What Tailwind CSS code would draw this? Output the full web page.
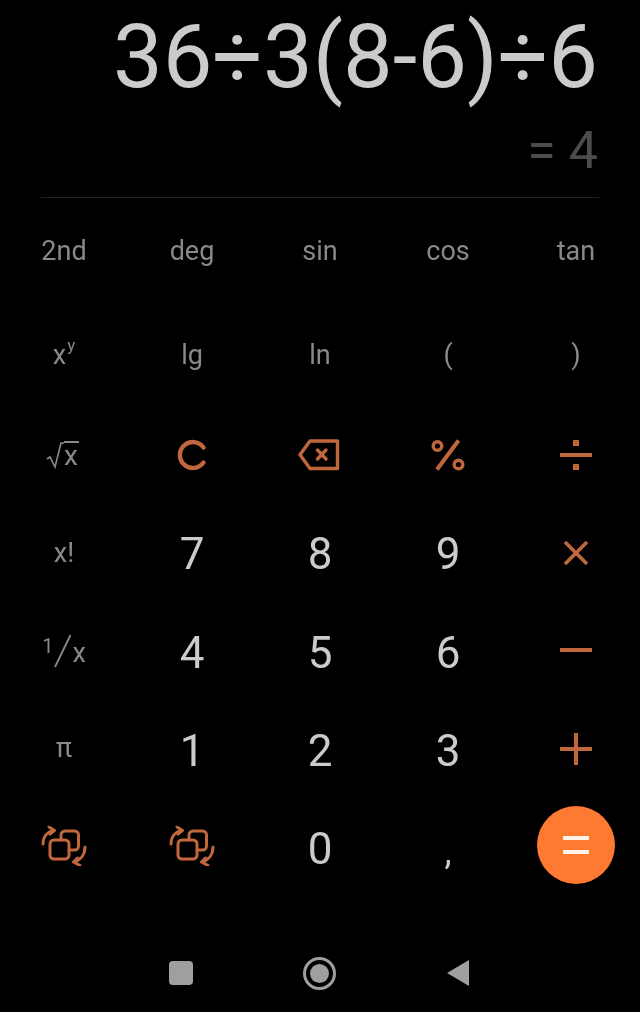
<!DOCTYPE html>
<html lang="en">

<head>
  <meta charset="UTF-8" />
  <meta name="viewport" content="width=device-width, initial-scale=1.0" />
  <title>Calculator</title>
  <script src="https://cdn.jsdelivr.net/npm/@tailwindcss/browser@4"></script>
</head>

<body class="bg-black">
  <main class="w-[640px] h-[1012px] overflow-hidden font-['Roboto',sans-serif] antialiased flex flex-col [will-change:opacity] opacity-[0.999]">
    <!-- Display -->
    <div class="h-[197px] mx-[41px] border-b border-[#222222] box-content flex flex-col items-end">
      <div class="mt-[7px] mr-[1px] text-[88.500px] leading-[100px] text-[#cccccc] whitespace-nowrap">36÷3(8-6)÷6</div>
      <div class="mt-[14px] mr-[1px] text-[52px] leading-[60px] text-[#4d4d4d] whitespace-nowrap">= 4</div>
    </div>

    <!-- Keypad -->
    <div class="grid grid-cols-5 grid-rows-[104px_103px_99px_98px_99px_97px_99px] text-[#8a8a8a] text-[27px]">
      <button class="flex items-center justify-center pt-[2px]">2nd</button>
      <button class="flex items-center justify-center pt-[2px]">deg</button>
      <button class="flex items-center justify-center pt-[2px]">sin</button>
      <button class="flex items-center justify-center pt-[2px]">cos</button>
      <button class="flex items-center justify-center pt-[2px]">tan</button>

      <button class="flex items-center justify-center pt-[3px]">x<sup class="text-[17px] -mt-[4px] ml-[1px]">y</sup></button>
      <button class="flex items-center justify-center pt-[3px]">lg</button>
      <button class="flex items-center justify-center pt-[3px]">ln</button>
      <button class="flex items-center justify-center pt-[3px]">(</button>
      <button class="flex items-center justify-center pt-[3px]">)</button>

      <button class="flex items-center justify-center pr-[3px]">
        <span class="flex items-end">
          <svg class="w-[18px] h-[28px]" viewBox="0 0 18 28" fill="none" stroke="#8a8a8a" stroke-width="1.600">
            <path d="M1 18l3 -2 5 10 6 -24 3 0" />
          </svg>
          <span class="border-t-2 border-[#8a8a8a] text-[28px] leading-[26px] pr-[1px]">x</span>
        </span>
      </button>
      <button class="flex items-center justify-center">
        <svg class="w-[32px] h-[32px]" viewBox="0 0 32 32" fill="none" stroke="#c2683f" stroke-width="4.400" stroke-linecap="round">
          <path d="M27.500 8.500A13 13 0 1 0 27.500 23.500" />
        </svg>
      </button>
      <button class="flex items-center justify-center pr-[2px]">
        <svg class="w-[42px] h-[32px]" viewBox="0 0 42 32" fill="none" stroke="#c2683f" stroke-width="3.400" stroke-linejoin="round" stroke-linecap="round">
          <path d="M12 2H39.500V29.500H12L2 15.750Z" />
          <path d="M19.500 11l8.500 9M28 11l-8.500 9" />
        </svg>
      </button>
      <button class="flex items-center justify-center">
        <svg class="w-[34px] h-[32px]" viewBox="0 0 34 32" fill="none" stroke="#c2683f">
          <circle cx="6.500" cy="7" r="4.300" stroke-width="3.400" />
          <circle cx="27.500" cy="25.500" r="4.300" stroke-width="3.400" />
          <path d="M27.500 1.500L6 30.500" stroke-width="4" />
        </svg>
      </button>
      <button class="flex items-center justify-center">
        <svg class="w-[34px] h-[34px]" viewBox="0 0 34 34" fill="#c2683f">
          <rect x="14" y="2" width="6" height="6" />
          <rect x="1" y="15" width="32" height="4" />
          <rect x="14" y="26" width="6" height="6" />
        </svg>
      </button>

      <button class="flex items-center justify-center">x!</button>
      <button class="flex items-center justify-center text-[44px] text-[#cccccc] pt-[2px]">7</button>
      <button class="flex items-center justify-center text-[44px] text-[#cccccc] pt-[2px]">8</button>
      <button class="flex items-center justify-center text-[44px] text-[#cccccc] pt-[2px]">9</button>
      <button class="flex items-center justify-center">
        <svg class="w-[30px] h-[30px]" viewBox="0 0 30 30" stroke="#c2683f" stroke-width="3.600">
          <path d="M4 4L26 26M26 4L4 26" />
        </svg>
      </button>

      <button class="flex items-center justify-center">
        <span class="flex items-start">
          <span class="text-[20px] leading-[24px]">1</span>
          <svg class="w-[19px] h-[34px]" viewBox="0 0 19 34" stroke="#8a8a8a" stroke-width="1.800">
            <path d="M17.500 1L2 33" />
          </svg>
          <span class="text-[27px] leading-[32px] mt-[3px]">x</span>
        </span>
      </button>
      <button class="flex items-center justify-center text-[44px] text-[#cccccc] pt-[2px]">4</button>
      <button class="flex items-center justify-center text-[44px] text-[#cccccc] pt-[2px]">5</button>
      <button class="flex items-center justify-center text-[44px] text-[#cccccc] pt-[2px]">6</button>
      <button class="flex items-center justify-center pb-[4px]">
        <span class="block w-[32px] h-[4px] bg-[#c2683f]"></span>
      </button>

      <button class="flex items-center justify-center pb-[2px]">π</button>
      <button class="flex items-center justify-center text-[44px] text-[#cccccc] pt-[2px]">1</button>
      <button class="flex items-center justify-center text-[44px] text-[#cccccc] pt-[2px]">2</button>
      <button class="flex items-center justify-center text-[44px] text-[#cccccc] pt-[2px]">3</button>
      <button class="flex items-center justify-center pb-[2px]">
        <svg class="w-[32px] h-[32px]" viewBox="0 0 32 32" fill="#c2683f">
          <rect x="0" y="14" width="32" height="4" />
          <rect x="14" y="0" width="4" height="32" />
        </svg>
      </button>

      <button class="flex items-center justify-center pb-[4px]">
        <svg class="w-[46px] h-[40px]" viewBox="0 0 46 40" fill="none" stroke="#c2683f" stroke-width="3" stroke-linecap="round" stroke-linejoin="round">
          <path d="M20 14V9a4 4 0 0 1 4 -4H33.500a4 4 0 0 1 4 4V20a4 4 0 0 1 -4 4H28" />
          <rect x="9" y="14" width="19" height="19" rx="4" />
          <path d="M2 18C2 11 6 6 12 4.500M8 1l5.500 3.500L9 8" />
          <path d="M44 21C44 28 40 34 33 36M39 39.500l-6.500 -3.500 4 -4" />
        </svg>
      </button>
      <button class="flex items-center justify-center pb-[4px]">
        <svg class="w-[46px] h-[40px]" viewBox="0 0 46 40" fill="none" stroke="#c2683f" stroke-width="3" stroke-linecap="round" stroke-linejoin="round">
          <path d="M20 14V9a4 4 0 0 1 4 -4H33.500a4 4 0 0 1 4 4V20a4 4 0 0 1 -4 4H28" />
          <rect x="9" y="14" width="19" height="19" rx="4" />
          <path d="M2 18C2 11 6 6 12 4.500M8 1l5.500 3.500L9 8" />
          <path d="M44 21C44 28 40 34 33 36M39 39.500l-6.500 -3.500 4 -4" />
        </svg>
      </button>
      <button class="flex items-center justify-center text-[44px] text-[#cccccc] pt-[2px]">0</button>
      <button class="flex items-center justify-center text-[36px] text-[#cccccc] pt-[8px]">,</button>
      <button class="flex items-center justify-center">
        <span class="w-[78px] h-[78px] mb-[6px] rounded-full bg-[#ff7a33] flex flex-col items-center justify-center gap-[10px]">
          <span class="block w-[26px] h-[4px] bg-[#fff3ea]"></span>
          <span class="block w-[26px] h-[4px] bg-[#fff3ea]"></span>
        </span>
      </button>
    </div>

    <!-- Nav bar -->
    <div class="mt-[60px] flex items-center justify-between pl-[169px] pr-[170px] h-[32px]">
      <span class="block w-[24px] h-[24px] rounded-[4px] bg-[#a0a0a0]"></span>
      <span class="w-[33px] h-[33px] rounded-full border-[3px] border-[#a0a0a0] flex items-center justify-center">
        <span class="block w-[19px] h-[19px] rounded-full bg-[#a0a0a0]"></span>
      </span>
      <svg class="w-[24px] h-[28px]" viewBox="0 0 24 28" fill="#a0a0a0">
        <path d="M1 14L23 1V27Z" />
      </svg>
    </div>
  </main>
</body>

</html>
